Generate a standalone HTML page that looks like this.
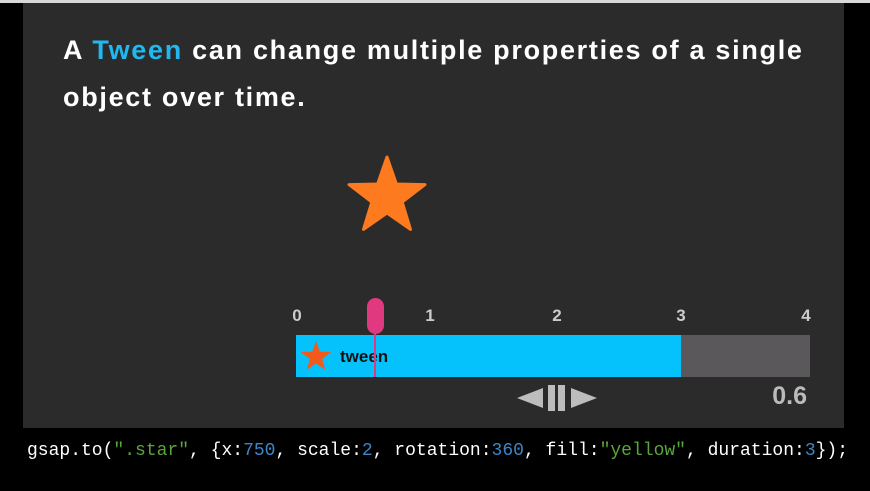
<!DOCTYPE html>
<html><head><style>
body{margin:0;width:870px;height:491px;background:#000;position:relative;overflow:hidden;font-family:"Liberation Sans",sans-serif}
.top{position:absolute;left:0;top:0;width:870px;height:3px;background:#d8d8d8}
.panel{position:absolute;left:23px;top:3px;width:821px;height:425px;background:#2b2b2b}
.title{position:absolute;left:63px;top:27px;width:760px;color:#fff;font-weight:bold;font-size:27px;letter-spacing:1.7px;line-height:47px}
.title span{color:#1fb8f0}
.lbl{position:absolute;top:306px;color:#ccc;font-weight:bold;font-size:17px;transform:translateX(-50%)}
.bar{position:absolute;left:296px;top:335px;width:514px;height:42px;background:#5a585b}
.blue{position:absolute;left:296px;top:335px;width:385px;height:42px;background:#05c2fc}
.tw{position:absolute;left:340px;top:347px;font-weight:bold;font-size:17px;color:#111}
.ph{position:absolute;left:374px;top:320px;width:2px;height:57px;background:#e0397f}
.pill{position:absolute;left:367px;top:298px;width:17px;height:36px;border-radius:9px;background:#e0397f}
.num{position:absolute;right:63px;top:382px;color:#bbb;font-weight:bold;font-size:25px}
.code{position:absolute;left:27px;top:441px;font-family:"Liberation Mono",monospace;font-size:18px;color:#fff;white-space:pre}
.s{color:#5aa63a}.n{color:#3c86c8}
</style></head><body>
<div class="top"></div>
<div class="panel"></div>
<div class="title">A <span>Tween</span> can change multiple properties of a single object over time.</div>
<svg style="position:absolute;left:345px;top:153px" width="84" height="84" viewBox="-42 -44 84 84"><polygon fill="#fd7a1e" stroke="#fd7a1e" stroke-width="3" stroke-linejoin="round" points="0,-40 9.4,-13 38,-12.4 15.2,5 23.5,32.4 0,16 -23.5,32.4 -15.2,5 -38,-12.4 -9.4,-13"/></svg>
<div class="lbl" style="left:297px">0</div>
<div class="lbl" style="left:430px">1</div>
<div class="lbl" style="left:557px">2</div>
<div class="lbl" style="left:681px">3</div>
<div class="lbl" style="left:806px">4</div>
<div class="bar"></div><div class="blue"></div>
<svg style="position:absolute;left:299px;top:340px" width="34" height="32" viewBox="-17 -17 34 32"><polygon fill="#f25a1c" points="0,-16 3.8,-5.2 15.2,-5 6.1,2 9.4,13 0,6.4 -9.4,13 -6.1,2 -15.2,-5 -3.8,-5.2"/></svg>
<div class="tw">tween</div>
<div class="ph"></div><div class="pill"></div>
<svg style="position:absolute;left:517px;top:384px" width="84" height="28"><polygon fill="#bdbdbd" points="0,14 26,4 26,24"/><rect x="31" y="1" width="7" height="26" fill="#bdbdbd"/><rect x="41" y="1" width="7" height="26" fill="#bdbdbd"/><polygon fill="#bdbdbd" points="54,4 80,14 54,24"/></svg>
<div class="num">0.6</div>
<div class="code">gsap.to(<span class="s">".star"</span>, {x:<span class="n">750</span>, scale:<span class="n">2</span>, rotation:<span class="n">360</span>, fill:<span class="s">"yellow"</span>, duration:<span class="n">3</span>});</div>
</body></html>
